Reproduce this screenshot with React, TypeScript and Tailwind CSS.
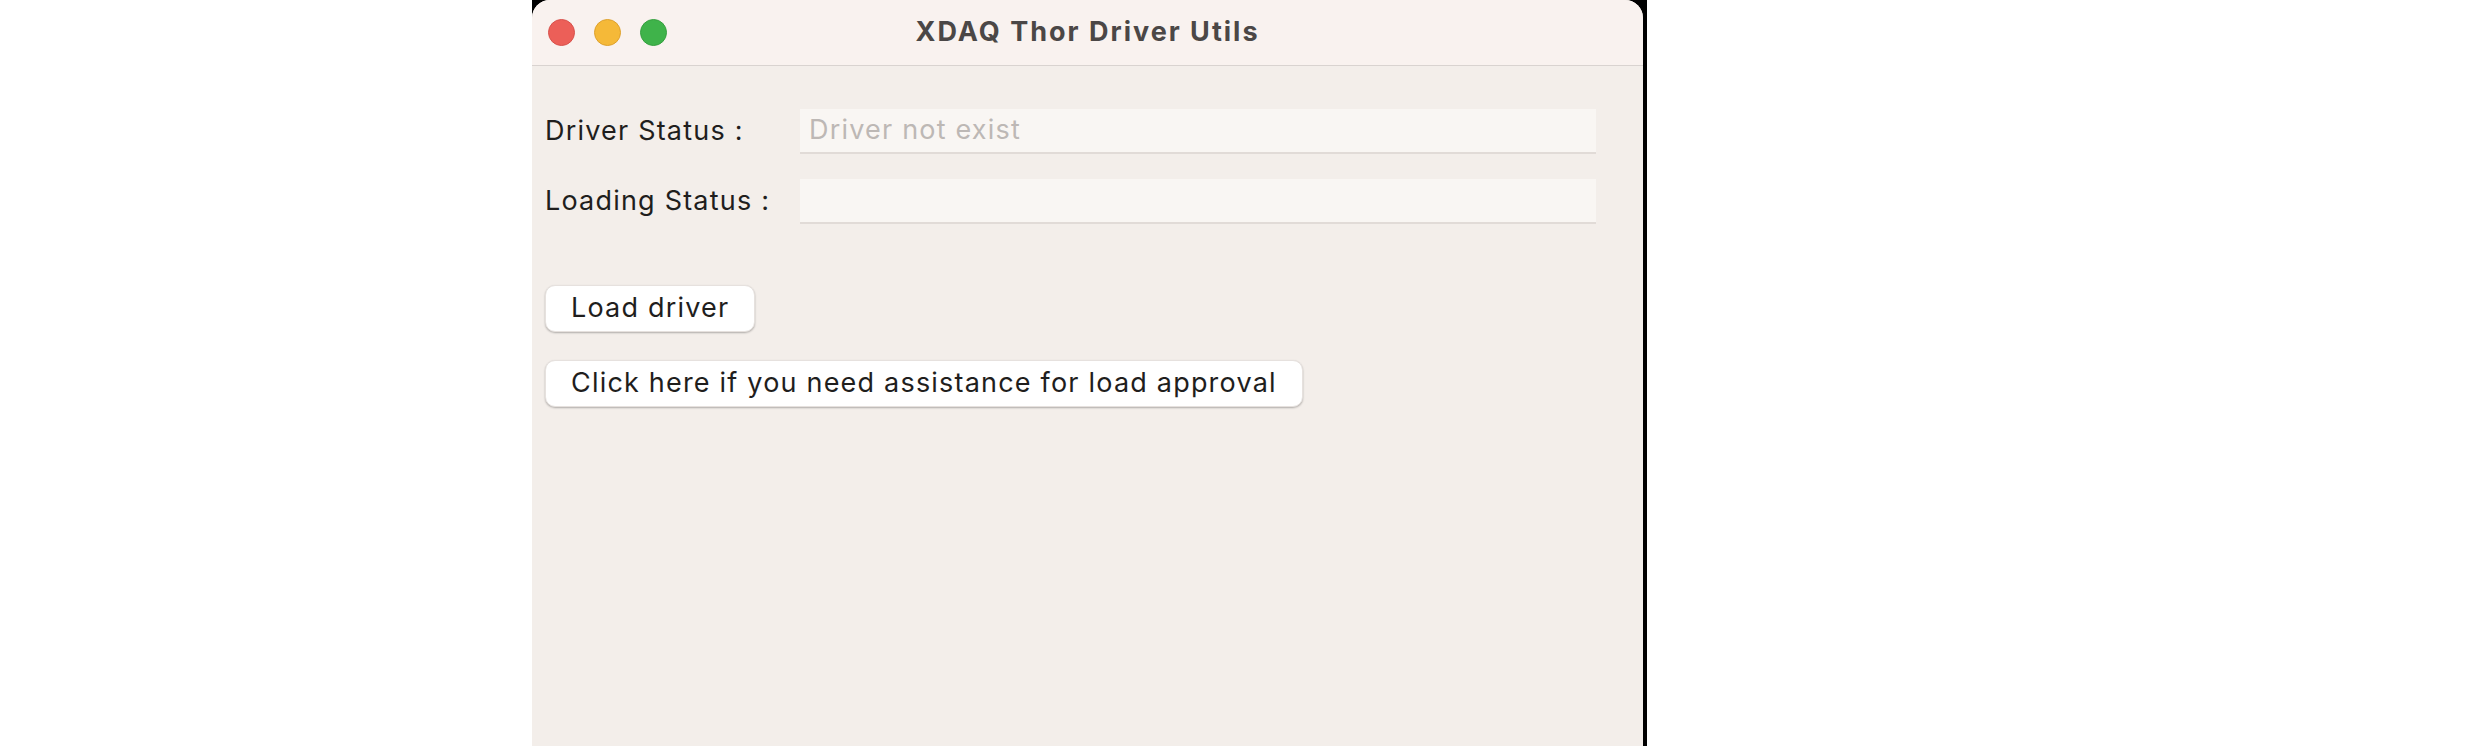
import React from "react"

const font = { fontFamily: "Inter, 'Noto Sans', sans-serif" }

const TrafficLights = () => (
  <div className="flex items-center gap-[19px] pl-[16px]">
    <span className="block w-[27px] h-[27px] rounded-full bg-[#ec5f58] border border-[#d8514b]" />
    <span className="block w-[27px] h-[27px] rounded-full bg-[#f5b938] border border-[#dea12c]" />
    <span className="block w-[27px] h-[27px] rounded-full bg-[#3fb34a] border border-[#35a03f]" />
  </div>
)

const StatusRow = ({ label, value }: { label: string; value?: string }) => (
  <div className="flex items-center">
    <div className="w-[255px] text-[27px] text-[#1f1e1d] tracking-[1.2px]">{label}</div>
    <div className="w-[796px] h-[45px] bg-[#f9f6f3] border-b-2 border-[#e1dbd7] flex items-center px-[9px] text-[27px] text-[#bdb8b5] tracking-[1.2px]">
      {value}
    </div>
  </div>
)

const MacButton = ({ children }: { children: React.ReactNode }) => (
  <button className="w-fit h-[47px] px-[25px] rounded-[10px] bg-white text-[27px] text-[#1f1e1d] tracking-[1.2px] border border-[#e6e1de] shadow-[0_1px_2px_rgba(0,0,0,0.28)]">
    {children}
  </button>
)

export default function App() {
  return (
    <div className="w-[2482px] h-[746px] bg-white flex" style={font}>
      <div className="ml-[532px] w-[1115px] h-full bg-black pr-[4px]">
        <div className="h-full rounded-t-[18px] bg-[#f3eeea] flex flex-col overflow-hidden">
          <div className="h-[66px] bg-[#f9f2ef] border-b border-[#d9d3d0] grid grid-cols-[1fr_auto_1fr] items-center">
            <TrafficLights />
            <div className="text-[27px] font-bold text-[#4b4746] tracking-[2px]">XDAQ Thor Driver Utils</div>
            <div />
          </div>
          <div className="flex flex-col pl-[13px] pt-[43px]">
            <div className="flex flex-col gap-[25px]">
              <StatusRow label="Driver Status :" value="Driver not exist" />
              <StatusRow label="Loading Status :" />
            </div>
            <div className="flex flex-col gap-[28px] mt-[61px]">
              <MacButton>Load driver</MacButton>
              <MacButton>Click here if you need assistance for load approval</MacButton>
            </div>
          </div>
        </div>
      </div>
    </div>
  )
}
